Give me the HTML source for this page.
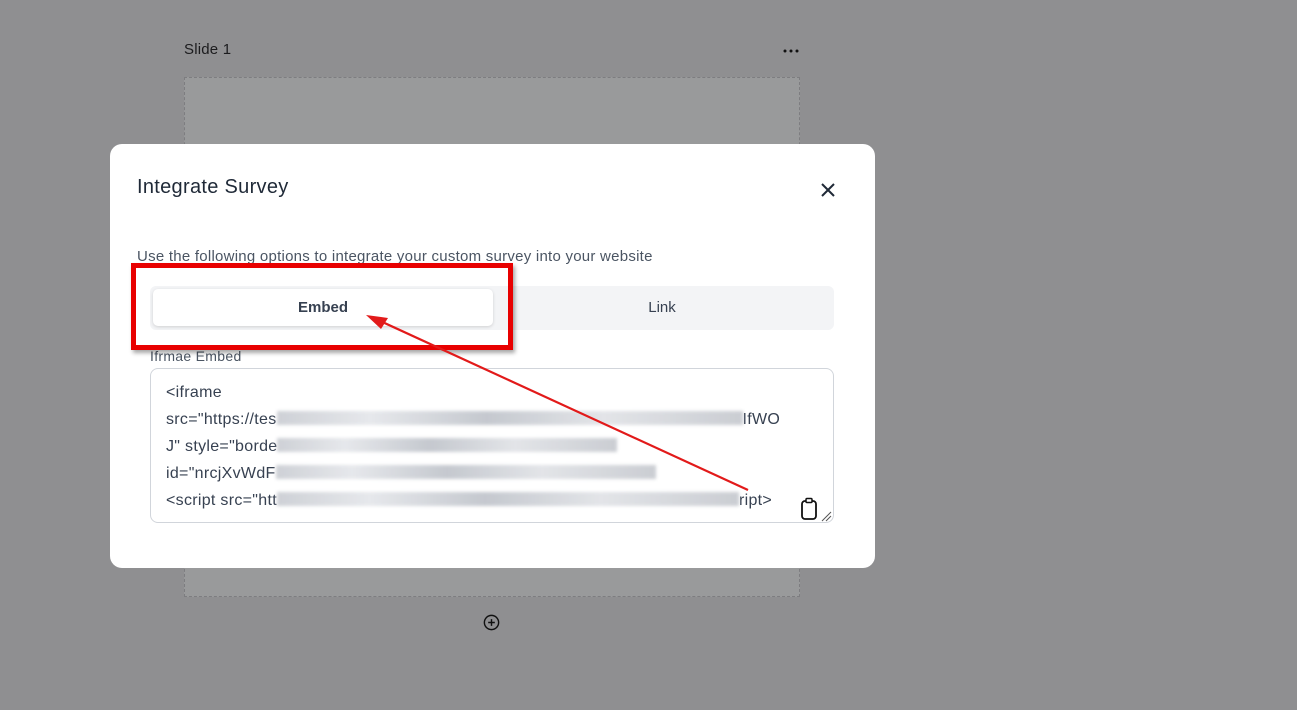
<!DOCTYPE html>
<html><head><style>
*{margin:0;padding:0;box-sizing:border-box}
body{width:1297px;height:710px;background:#8f8f91;position:relative;overflow:hidden;font-family:"Liberation Sans",sans-serif;color:#1f2937}
.abs{position:absolute}
.bl{display:inline-block;vertical-align:middle;height:14px;margin-top:-3px;background:linear-gradient(90deg,#c9ccd2,#e4e6ea 20%,#bfc3ca 45%,#e0e2e6 70%,#c5c8ce);filter:blur(1.5px);opacity:.9}
</style></head><body>
<div class="abs" style="left:184px;top:41px;font-size:15px;color:#1c1c1e;letter-spacing:.2px">Slide 1</div>
<svg class="abs" style="left:783px;top:48px" width="16" height="6"><circle cx="2" cy="3" r="1.5" fill="#111"/><circle cx="8" cy="3" r="1.5" fill="#111"/><circle cx="14" cy="3" r="1.5" fill="#111"/></svg>
<div class="abs" style="left:184px;top:77px;width:616px;height:520px;border:1px dashed #7d7d80;background:#999a9b"></div>
<svg class="abs" style="left:482px;top:613px" width="19" height="19" viewBox="0 0 20 20"><circle cx="10" cy="10" r="7.5" fill="none" stroke="#111" stroke-width="1.5"/><path d="M10 6.5v7M6.5 10h7" stroke="#111" stroke-width="1.5"/></svg>

<div class="abs" style="left:110px;top:144px;width:765px;height:424px;background:#fff;border-radius:12px"></div>
<div class="abs" style="left:137px;top:176px;font-size:20px;color:#1f2937;letter-spacing:.3px">Integrate Survey</div>
<svg class="abs" style="left:819px;top:181px" width="18" height="18" viewBox="0 0 18 18"><path d="M3 3l12 12M15 3L3 15" stroke="#1f2937" stroke-width="2"/></svg>
<div class="abs" style="left:137px;top:248px;font-size:15px;color:#4b5563;letter-spacing:.25px">Use the following options to integrate your custom survey into your website</div>
<div class="abs" style="left:150px;top:286px;width:684px;height:44px;background:#f3f4f6;border-radius:6px"></div>
<div class="abs" style="left:153px;top:289px;width:340px;height:37px;background:#fff;border-radius:5px;box-shadow:0 1px 3px rgba(0,0,0,.15);text-align:center;line-height:37px;font-size:15px;font-weight:bold;color:#374151">Embed</div>
<div class="abs" style="left:493px;top:289px;width:338px;height:37px;text-align:center;line-height:37px;font-size:15px;color:#374151">Link</div>
<div class="abs" style="left:150px;top:348px;font-size:14px;color:#4b5563;letter-spacing:.3px">Ifrmae Embed</div>
<div class="abs" style="left:150px;top:368px;width:684px;height:155px;border:1px solid #d1d5db;border-radius:8px;padding:10px 15px;font-size:16px;line-height:27px;color:#374151;white-space:nowrap;overflow:hidden;letter-spacing:.3px">
&lt;iframe<br>src="https://tes<span class="bl" style="width:466px"></span>IfWO<br>J" style="borde<span class="bl" style="width:340px"></span><br>id="nrcjXvWdF<span class="bl" style="width:380px"></span><br>&lt;script src="htt<span class="bl" style="width:462px"></span>ript&gt;
</div>
<svg class="abs" style="left:800px;top:497px" width="20" height="24" viewBox="0 0 20 24"><rect x="2" y="4" width="14" height="18" rx="3" fill="#fff" stroke="#111" stroke-width="1.8"/><rect x="6" y="1.5" width="6" height="4" rx="1" fill="#fff" stroke="#111" stroke-width="1.5"/></svg>
<svg class="abs" style="left:820px;top:510px" width="12" height="12"><path d="M2 11L11 2M6 11L11 6" stroke="#555" stroke-width="1"/></svg>

<div class="abs" style="left:131px;top:263px;width:382px;height:87px;border:5px solid #e80000;box-shadow:2px 3px 4px rgba(0,0,0,.35)"></div>
<svg class="abs" style="left:0;top:0" width="1297" height="710"><path d="M748 490L378 320" stroke="#e21a1a" stroke-width="2.2"/><path d="M366 315L388 318L381 329Z" fill="#e21a1a"/></svg>
</body></html>
